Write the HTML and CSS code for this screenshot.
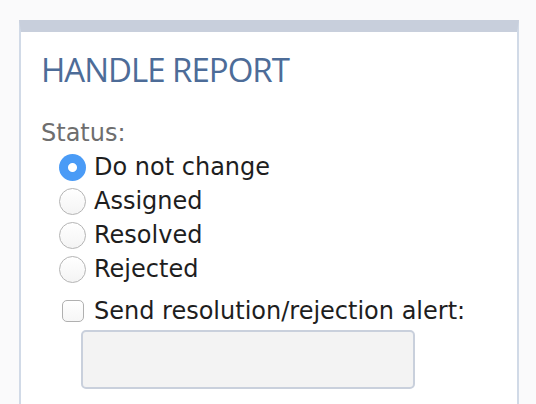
FILE: index.html
```html
<!DOCTYPE html>
<html lang="en">
<head>
<meta charset="utf-8">
<title>Handle report</title>
<link rel="stylesheet" href="styles.css">
</head>
<body>
<section class="panel">
  <h2 class="title">HANDLE REPORT</h2>
  <div class="field">
    <div class="label">Status:</div>
    <label class="option"><input type="radio" name="status" class="radio" checked><span>Do not change</span></label>
    <label class="option"><input type="radio" name="status" class="radio"><span>Assigned</span></label>
    <label class="option"><input type="radio" name="status" class="radio"><span>Resolved</span></label>
    <label class="option"><input type="radio" name="status" class="radio"><span>Rejected</span></label>
  </div>
  <label class="check-row"><input type="checkbox" class="check"><span>Send resolution/rejection alert:</span></label>
  <input type="text" class="alert-input" disabled>
</section>
</body>
</html>
```

FILE: styles.css
```css
html, body {
  margin: 0;
  padding: 0;
  background: #fafafb;
}
body {
  padding: 20px 0 0 19px;
  font-family: "DejaVu Sans", Verdana, sans-serif;
  color: #1e1e1e;
}
.panel {
  box-sizing: border-box;
  width: 500px;
  min-height: 400px;
  background: #ffffff;
  border-top: 12px solid #c8cfdc;
  border-left: 2px solid #d1dae7;
  border-right: 2px solid #d1dae7;
  padding: 0 20px;
}
.title {
  margin: 0;
  padding-top: 18px;
  font-family: "Open Sans", "Noto Sans", sans-serif;
  font-weight: normal;
  font-size: 33px;
  letter-spacing: -1px;
  line-height: 40px;
  color: #4d6c98;
}
.field {
  margin-top: 26px;
  display: flex;
  flex-direction: column;
}
.label {
  font-size: 24px;
  line-height: 34px;
  color: #6e6e6e;
}
.option {
  display: flex;
  align-items: center;
  gap: 8px;
  padding-left: 18px;
  font-size: 24px;
  line-height: 34px;
}
.radio {
  -webkit-appearance: none;
  appearance: none;
  margin: 0;
  width: 27px;
  height: 27px;
  border-radius: 50%;
  border: 1px solid #b4b4b4;
  background: linear-gradient(#ffffff, #f4f4f4);
  box-sizing: border-box;
  flex: none;
}
.radio:checked {
  border: none;
  background: radial-gradient(circle, #ffffff 0, #ffffff 4px, #4a9bf6 5px);
}
.check-row {
  display: flex;
  align-items: center;
  gap: 10px;
  padding-left: 21px;
  margin-top: 8px;
  font-size: 24px;
  line-height: 34px;
}
.check {
  -webkit-appearance: none;
  appearance: none;
  margin: 0;
  width: 22px;
  height: 22px;
  border: 1px solid #b0b0b0;
  border-radius: 5px;
  background: linear-gradient(#ffffff, #f6f6f6);
  box-sizing: border-box;
  flex: none;
}
.alert-input {
  display: block;
  margin: 2px 0 0 40px;
  width: 334px;
  height: 59px;
  box-sizing: border-box;
  border: 2px solid #c9d0dc;
  border-radius: 5px;
  background: #f3f3f3;
}
```
